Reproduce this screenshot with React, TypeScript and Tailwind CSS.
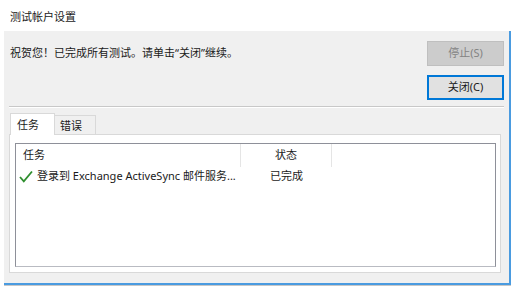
import React from "react";

const font = { fontFamily: '"Noto Sans", "Noto Sans CJK SC", sans-serif' };

export default function App() {
  return (
    <div className="relative h-[293px] w-[517px] overflow-hidden bg-white text-[11px] text-[#1a1a1a]" style={font}>
      {/* Title bar */}
      <div className="flex h-[31px] items-start pl-[10px] pt-[9px] leading-[16px]">测试帐户设置</div>

      {/* Window body */}
      <div className="ml-[4px] h-[254px] w-[507px] border-r-2 border-b-2 border-[#4a9be0] bg-[#f0f0f0]">
        <div className="flex justify-between pl-[6px] pr-[5px]">
          <p className="mt-[14px] leading-[16px]">祝贺您！已完成所有测试。请单击“关闭”继续。</p>
          <div className="flex flex-col gap-[9px] pt-[10px]">
            <button className="h-[25px] w-[77px] border border-[#bfbfbf] bg-[#cccccc] text-[11px] text-[#838383]">
              停止(S)
            </button>
            <button className="h-[25px] w-[77px] border-2 border-[#0078d7] bg-[#e1e1e1] text-[11px] text-[#1a1a1a]">
              关闭(C)
            </button>
          </div>
        </div>

        {/* Separator */}
        <div className="mx-[5px] mt-[6px] h-[2px] border-t border-b border-t-[#c8c8c8] border-b-white" />

        {/* Tabs */}
        <div className="mx-[5px] mt-[5px]">
          <div className="flex items-end">
            <div className="relative z-10 -mb-px ml-px flex h-[22px] w-[45px] items-start border border-b-0 border-[#d9d9d9] bg-white pl-[6px] pt-[3px] leading-[16px]">
              任务
            </div>
            <div className="flex h-[19px] w-[41px] items-start border border-l-0 border-b-0 border-[#d9d9d9] bg-[#f0f0f0] pl-[5px] pt-[2px] leading-[16px]">
              错误
            </div>
          </div>
          <div className="h-[139px] w-[492px] border border-[#d9d9d9] bg-white pl-[5px] pr-[4px] pt-[8px]">
            {/* List view */}
            <div className="h-[124px] border border-[#8e9099] border-b-[#b9bbc2] bg-white">
              <div className="flex h-[23px] items-stretch">
                <div className="flex w-[225px] items-center border-r border-[#e5e5e5] pl-[7px]">任务</div>
                <div className="flex w-[91px] items-center justify-center border-r border-[#e5e5e5]">状态</div>
              </div>
              <div className="flex h-[19px] items-center">
                <div className="flex w-[225px] items-center pl-[3px]">
                  <svg width="14" height="13" viewBox="0 0 14 13" className="mr-[4px] shrink-0">
                    <path d="M1 7 L4.8 11.3 L13 1.5" fill="none" stroke="#2f8f2f" strokeWidth="1.8" />
                  </svg>
                  <span className="whitespace-nowrap">登录到 Exchange ActiveSync 邮件服务...</span>
                </div>
                <div className="flex w-[91px] items-center justify-center">已完成</div>
              </div>
            </div>
          </div>
        </div>
      </div>
      <div className="ml-[4px] h-px w-[507px] bg-[#c7c7c7]" />
    </div>
  );
}
